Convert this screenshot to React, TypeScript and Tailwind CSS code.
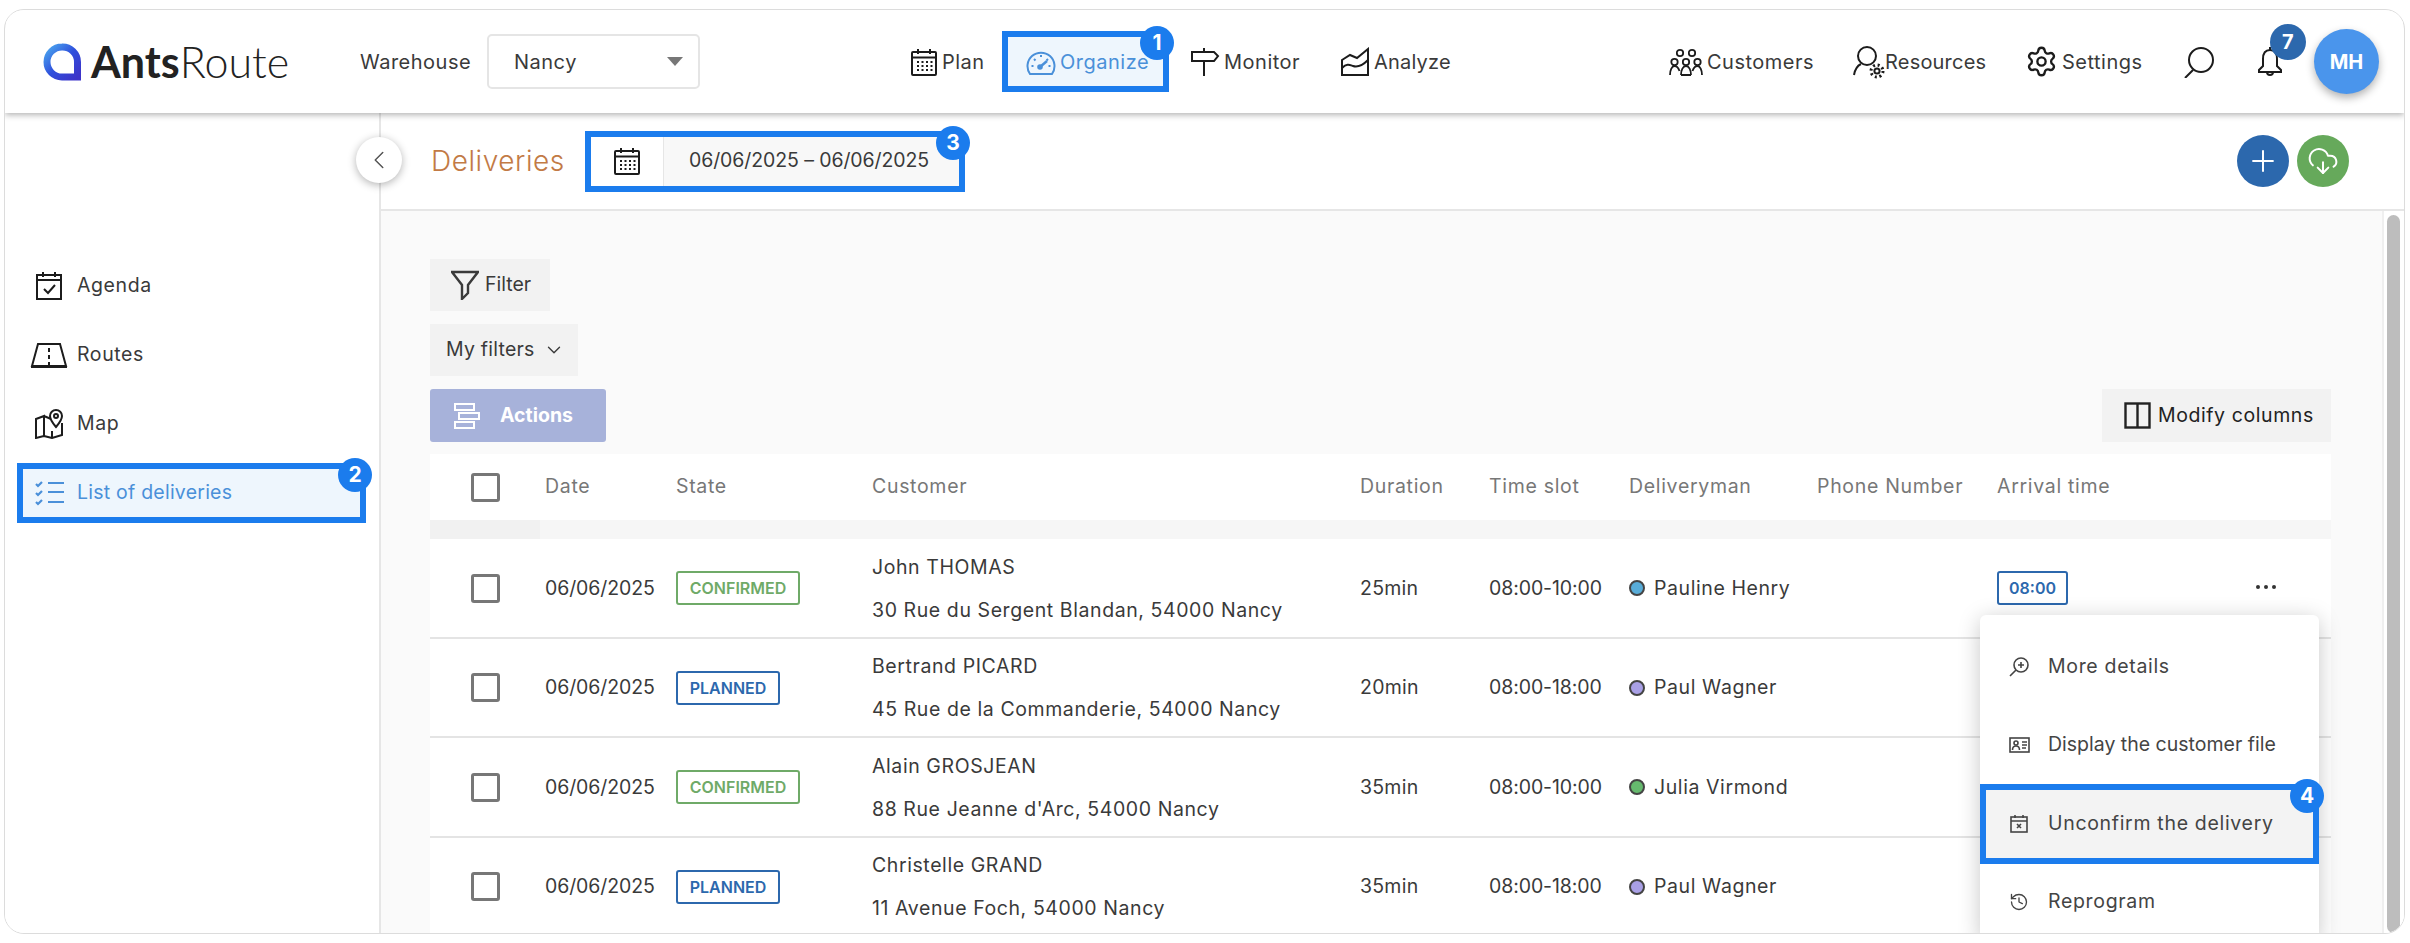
import { ReactNode } from "react"
import { ChevronDown, ChevronLeft, CloudDownload, History, Plus, Settings } from "lucide-react"

const ROW_GRID = "grid grid-cols-[115px_131px_196px_488px_129px_140px_188px_180px_255px_79px] items-center"

const DELIVERIES = [
    { state: "CONFIRMED", name: "John THOMAS", address: "30 Rue du Sergent Blandan, 54000 Nancy", duration: "25min", slot: "08:00-10:00", man: "Pauline Henry", dot: "bg-[#58acd8]", arrival: "08:00" },
    { state: "PLANNED", name: "Bertrand PICARD", address: "45 Rue de la Commanderie, 54000 Nancy", duration: "20min", slot: "08:00-18:00", man: "Paul Wagner", dot: "bg-[#a9a0e6]", arrival: "" },
    { state: "CONFIRMED", name: "Alain GROSJEAN", address: "88 Rue Jeanne d'Arc, 54000 Nancy", duration: "35min", slot: "08:00-10:00", man: "Julia Virmond", dot: "bg-[#66b96e]", arrival: "" },
    { state: "PLANNED", name: "Christelle GRAND", address: "11 Avenue Foch, 54000 Nancy", duration: "35min", slot: "08:00-18:00", man: "Paul Wagner", dot: "bg-[#a9a0e6]", arrival: "" },
]

function Svg({ w, h, children, sw = 2 }: { w: number; h: number; children: ReactNode; sw?: number }) {
    return (
        <svg width={w} height={h} viewBox={`0 0 ${w} ${h}`} fill="none" stroke="currentColor" strokeWidth={sw} className="shrink-0">
            {children}
        </svg>
    )
}

function Logo() {
    return (
        <svg width="40" height="38" viewBox="0 0 40 38" fill="none" className="shrink-0">
            <defs>
                <linearGradient id="logoGrad" x1="0" y1="0" x2="1" y2="1">
                    <stop offset="0" stopColor="#4aa5ee" />
                    <stop offset="0.5" stopColor="#2f4fdc" />
                    <stop offset="1" stopColor="#3d34c9" />
                </linearGradient>
            </defs>
            <path d="M20 4a15 15 0 0 1 15.5 15v15H20a15 15 0 0 1 0-30z" stroke="url(#logoGrad)" strokeWidth="7" />
        </svg>
    )
}

function CalendarGrid() {
    return (
        <Svg w={28} h={28}>
            <rect x="2" y="4" width="24" height="23" rx="1" />
            <path d="M2 9.5h24M8 1v5M20 1v5" />
            <g fill="currentColor" stroke="none">
                {[13, 17, 21].map((y) =>
                    [7, 11.5, 16, 20.5].map((x) => <rect key={`${x}-${y}`} x={x} y={y} width="2" height="2" />)
                )}
            </g>
        </Svg>
    )
}

function Gauge() {
    return (
        <Svg w={30} h={28} sw={2}>
            <path d="M4 26a13.5 13.5 0 1 1 22 0z" />
            <path d="M15 7v2M8 11l1.5 1.5M5.5 18h2M24.5 18h-2M22 11l-1.5 1.5" />
            <path d="M14 19l7-6" strokeWidth="2.5" />
            <circle cx="14" cy="19" r="1.8" fill="currentColor" />
        </Svg>
    )
}

function Signpost() {
    return (
        <Svg w={30} h={28}>
            <path d="M14 0v4M2 4h22l4 4-4 5H2zM14 13v15" />
        </Svg>
    )
}

function AnalyzeIcon() {
    return (
        <Svg w={30} h={30}>
            <path d="M2 13l8-5 7 3 11-9v26H2z" />
            <path d="M2 21c5-5 8-3 11-2s8 1 15-6M2 28h26" />
        </Svg>
    )
}

function CustomersIcon() {
    return (
        <Svg w={34} h={28} sw={1.8}>
            <circle cx="11" cy="5" r="3.2" />
            <circle cx="23" cy="5" r="3.2" />
            <circle cx="5.5" cy="14" r="3.2" />
            <circle cx="17" cy="14" r="3.2" />
            <circle cx="28.5" cy="14" r="3.2" />
            <path d="M1 27c0-5 2-9 4.5-9s4 2 5 5M12 27c0-5 2-9 5-9s5 4 5 9M33 27c0-5-2-9-4.5-9s-4 2-5 5M12 27h10" />
        </Svg>
    )
}

function ResourcesIcon() {
    return (
        <Svg w={36} h={34}>
            <circle cx="14" cy="11" r="9" />
            <path d="M1 30c1-6 3-9 7-11" />
            <circle cx="24" cy="26" r="2.6" />
            <circle cx="24" cy="26" r="6" strokeWidth="3" strokeDasharray="2 2.7" />
        </Svg>
    )
}

function SearchIcon() {
    return (
        <Svg w={32} h={32}>
            <circle cx="18" cy="14" r="12" />
            <path d="M10 24L2 32" />
        </Svg>
    )
}

function BellIcon() {
    return (
        <Svg w={26} h={32}>
            <path d="M13 4c-5 0-7 4-7 9v7l-4 4v2h22v-2l-4-4v-7c0-5-2-9-7-9zM13 1v3M10 26a3 3 0 0 0 6 0" />
        </Svg>
    )
}

function AgendaIcon() {
    return (
        <Svg w={26} h={28}>
            <rect x="1" y="3" width="24" height="24" />
            <path d="M1 8h24M7 0v5M19 0v5M8 17l4 4 7-8" />
        </Svg>
    )
}

function RoutesIcon() {
    return (
        <Svg w={38} h={26}>
            <path d="M8 2h22l6 22H2zM1 25h36M19 6v4M19 13v4M19 20v3" />
        </Svg>
    )
}

function MapIcon() {
    return (
        <Svg w={30} h={30}>
            <path d="M2 10l8-3v20l-8 2zM10 7l7 3M10 27l8 2 10-3V14M18 22v7" />
            <path d="M22 1a6 6 0 0 1 6 6c0 4-6 11-6 11s-6-7-6-11a6 6 0 0 1 6-6z" />
            <circle cx="22" cy="7" r="2" />
        </Svg>
    )
}

function ListIcon() {
    return (
        <Svg w={30} h={26}>
            <path d="M1 4l2 2 4-4M1 13l2 2 4-4M1 22l2 2 4-4" strokeWidth="2.2" />
            <path d="M13 3h16M13 12h16M13 22h16" strokeWidth="2.2" />
        </Svg>
    )
}

function FunnelIcon() {
    return (
        <Svg w={28} h={30} sw={2.4}>
            <path d="M1 2h26L17 15v8l-6 6V15z" />
        </Svg>
    )
}

function ActionsIcon() {
    return (
        <Svg w={26} h={26}>
            <rect x="1" y="1" width="19" height="6" />
            <rect x="5" y="10" width="20" height="6" />
            <rect x="1" y="19" width="19" height="6" />
        </Svg>
    )
}

function ColumnsIcon() {
    return (
        <Svg w={27} h={27} sw={2.4}>
            <rect x="1.5" y="1.5" width="24" height="24" />
            <path d="M13.5 1.5v24" />
        </Svg>
    )
}

function MoreIcon() {
    return (
        <Svg w={20} h={20} sw={1.6}>
            <circle cx="12" cy="8" r="7" />
            <path d="M7 13l-6 6M12 5v6M9 8h6" />
        </Svg>
    )
}

function CardIcon() {
    return (
        <Svg w={21} h={16} sw={1.6}>
            <rect x="1" y="1" width="19" height="14" />
            <circle cx="7" cy="6" r="2" />
            <path d="M3.5 13c0-3 1.5-4 3.5-4s3.5 1 3.5 4M13 5h5M13 8h5M13 11h4" />
        </Svg>
    )
}

function CalendarX() {
    return (
        <Svg w={18} h={18} sw={1.6}>
            <rect x="1" y="2" width="16" height="15" />
            <path d="M1 6h16M5 0v3M13 0v3M7 9l4 4M11 9l-4 4" />
        </Svg>
    )
}

function Marker({ n, className }: { n: number; className: string }) {
    return (
        <span className={`absolute flex h-[34px] w-[34px] items-center justify-center rounded-full bg-[#1b7ced] text-[21px] font-bold tracking-normal text-white ${className}`}>
            {n}
        </span>
    )
}

function NavItem({ icon, label, className }: { icon: ReactNode; label: string; className: string }) {
    return (
        <div className={`flex shrink-0 items-center gap-[4px] [&>svg]:text-[#1c1c1c] ${className}`}>
            {icon}
            <span>{label}</span>
        </div>
    )
}

function SideItem({ icon, label, className }: { icon: ReactNode; label: string; className: string }) {
    return (
        <div className={`flex items-center ${className}`}>
            <div className="flex w-[72px] shrink-0 justify-center pl-[16px] text-[#1c1c1c]">{icon}</div>
            <span className="tracking-[0.03em]">{label}</span>
        </div>
    )
}

function StateBadge({ state }: { state: string }) {
    const confirmed = state === "CONFIRMED"
    return (
        <span className={`inline-flex h-[34px] items-center justify-center rounded-[3px] border-2 text-[16px] font-semibold tracking-normal ${confirmed ? "w-[124px] border-[#6faa68] text-[#6faa68]" : "w-[104px] border-[#2c68ad] text-[#2c68ad]"}`}>
            {state}
        </span>
    )
}

function Checkbox() {
    return (
        <div className="pl-[41px]">
            <div className="h-[29px] w-[29px] rounded-[3px] border-[3px] border-[#777]" />
        </div>
    )
}

export default function App() {
    return (
        <div className="h-[943px] w-[2410px] overflow-hidden bg-white pb-[9px] pl-[4px] pr-[5px] pt-[9px] font-['Inter',sans-serif] text-[19.5px] tracking-[0.012em] text-[#3a3a3a]">
            <div className="flex h-full flex-col overflow-hidden rounded-[20px] border border-[#dcdcdc]">
                {/* Top bar */}
                <header className="relative z-20 flex h-[103px] shrink-0 items-center bg-white text-[20px] tracking-[0.025em] shadow-[0_2px_6px_rgba(0,0,0,0.3)]">
                    <div className="ml-[37px] flex w-[248px] shrink-0 items-center gap-[9px] font-['Lato',sans-serif] text-[43px] leading-none tracking-normal text-[#222]">
                        <Logo />
                        <span>
                            <span className="font-bold">Ants</span>
                            <span className="font-light">Route</span>
                        </span>
                    </div>
                    <span className="ml-[70px] w-[127px] shrink-0">Warehouse</span>
                    <div className="flex h-[55px] w-[213px] shrink-0 items-center rounded-[5px] border-2 border-[#e5e5e5] pl-[25px]">
                        <span>Nancy</span>
                        <span className="ml-[90px] h-0 w-0 border-x-[8px] border-t-[9px] border-x-transparent border-t-[#777]" />
                    </div>

                    <NavItem icon={<CalendarGrid />} label="Plan" className="ml-[210px] w-[92px]" />
                    <div className="relative flex h-[61px] w-[167px] shrink-0 items-center gap-[4px] border-[6px] border-[#1b7ced] bg-[#eef6fd] pl-[18px] text-[#4a90d9]">
                        <Gauge />
                        <span>Organize</span>
                        <Marker n={1} className="right-[-11px] top-[-11px]" />
                    </div>
                    <NavItem icon={<Signpost />} label="Monitor" className="ml-[21px] w-[150px]" />
                    <NavItem icon={<AnalyzeIcon />} label="Analyze" className="w-[329px] tracking-[0.01em]" />
                    <NavItem icon={<CustomersIcon />} label="Customers" className="w-[184px] gap-[2px]" />
                    <NavItem icon={<ResourcesIcon />} label="Resources" className="w-[172px] gap-0 tracking-[0.01em] [&>span]:ml-[-8px]" />
                    <NavItem icon={<Settings size={33} strokeWidth={1.7} />} label="Settings" className="w-[158px] gap-0" />
                    <div className="w-[74px] shrink-0 text-[#1c1c1c]">
                        <SearchIcon />
                    </div>
                    <div className="relative w-[57px] shrink-0 text-[#1c1c1c]">
                        <BellIcon />
                        <span className="absolute left-[13px] top-[-22px] flex h-[36px] w-[36px] items-center justify-center rounded-full bg-[#2c68ad] text-[20px] font-bold text-white">
                            7
                        </span>
                    </div>
                    <div className="z-10 flex h-[65px] w-[65px] shrink-0 items-center justify-center rounded-full bg-[#4a95ec] text-[20px] font-bold tracking-normal text-white shadow-[0_4px_8px_rgba(0,0,0,0.3)]">
                        MH
                    </div>
                </header>

                <div className="flex min-h-0 flex-1">
                    {/* Sidebar */}
                    <aside className="relative flex w-[376px] shrink-0 flex-col border-r-2 border-[#e6e6e6] bg-white pt-[139px]">
                        <SideItem icon={<AgendaIcon />} label="Agenda" className="h-[68px]" />
                        <SideItem icon={<RoutesIcon />} label="Routes" className="h-[69px]" />
                        <SideItem icon={<MapIcon />} label="Map" className="h-[69px]" />
                        <div className="relative ml-[12px] mt-[5px] flex h-[60px] w-[349px] items-center border-[6px] border-[#1b7ced] bg-[#eef6fd] text-[#4a90d9]">
                            <div className="ml-[12px] w-[42px] shrink-0">
                                <ListIcon />
                            </div>
                            <span>List of deliveries</span>
                            <Marker n={2} className="right-[-12px] top-[-11px]" />
                        </div>
                        <div className="absolute right-[-23px] top-[24px] z-10 flex h-[46px] w-[46px] items-center justify-center rounded-full bg-white shadow-[0_2px_8px_rgba(0,0,0,0.3)]">
                            <ChevronLeft size={30} strokeWidth={1.2} className="text-[#555]" />
                        </div>
                    </aside>

                    <main className="flex min-w-0 flex-1 flex-col">
                        {/* Title row */}
                        <div className="flex h-[98px] shrink-0 items-center border-b-2 border-[#e6e6e6] bg-white pl-[50px]">
                            <span className="w-[154px] shrink-0 text-[28px] font-light tracking-[0.02em] text-[#c27a45]">Deliveries</span>
                            <div className="relative flex h-[61px] w-[380px] shrink-0 items-center border-[6px] border-[#1b7ced] bg-[#f8f8f8]">
                                <div className="flex h-full w-[73px] shrink-0 items-center justify-center border-r border-[#e6e6e6] bg-white text-[#1c1c1c]">
                                    <CalendarGrid />
                                </div>
                                <span className="ml-[25px] whitespace-nowrap tracking-[-0.1px]">06/06/2025 – 06/06/2025</span>
                                <Marker n={3} className="right-[-11px] top-[-11px]" />
                            </div>
                            <div className="ml-auto mr-[55px] flex gap-[8px]">
                                <div className="flex h-[52px] w-[52px] items-center justify-center rounded-full bg-[#2c68ad] text-white">
                                    <Plus size={34} strokeWidth={1.4} />
                                </div>
                                <div className="flex h-[52px] w-[52px] items-center justify-center rounded-full bg-[#66a95b] text-white">
                                    <CloudDownload size={32} strokeWidth={1.5} />
                                </div>
                            </div>
                        </div>

                        <div className="flex min-h-0 flex-1 bg-[#fafafa]">
                            <div className="relative min-w-0 flex-1 overflow-hidden pl-[49px] pr-[51px] pt-[48px]">
                                <div className="flex h-[52px] w-[120px] items-center gap-[6px] bg-[#f2f2f2] pl-[21px]">
                                    <FunnelIcon />
                                    <span className="tracking-normal">Filter</span>
                                </div>
                                <div className="mt-[13px] flex h-[52px] w-[148px] items-center gap-[8px] bg-[#f2f2f2] pl-[16px]">
                                    <span>My filters</span>
                                    <ChevronDown size={22} strokeWidth={1.5} />
                                </div>
                                <div className="mt-[13px] flex h-[53px] items-center justify-between">
                                    <div className="flex h-full w-[176px] items-center gap-[20px] rounded-[3px] bg-[#a7b2da] pl-[24px] font-bold tracking-normal text-white">
                                        <ActionsIcon />
                                        <span>Actions</span>
                                    </div>
                                    <div className="flex h-full w-[229px] items-center gap-[7px] bg-[#f2f2f2] pl-[22px] tracking-[0.03em] text-[#222]">
                                        <ColumnsIcon />
                                        <span>Modify columns</span>
                                    </div>
                                </div>

                                {/* Table */}
                                <div className={`${ROW_GRID} mt-[12px] h-[66px] bg-white tracking-[0.035em] text-[#777]`}>
                                    <Checkbox />
                                    <span>Date</span>
                                    <span>State</span>
                                    <span>Customer</span>
                                    <span>Duration</span>
                                    <span>Time slot</span>
                                    <span>Deliveryman</span>
                                    <span>Phone Number</span>
                                    <span>Arrival time</span>
                                    <span />
                                </div>
                                <div className="h-[19px] bg-[#f6f6f6]">
                                    <div className="h-full w-[110px] bg-[#f1f1f1]" />
                                </div>
                                {DELIVERIES.map((d, i) => (
                                    <div key={d.name} className={`${ROW_GRID} h-[99.5px] border-b-2 border-[#e4e4e4] bg-white pt-[1px]`}>
                                        <Checkbox />
                                        <span className="tracking-[-0.1px]">06/06/2025</span>
                                        <div>
                                            <StateBadge state={d.state} />
                                        </div>
                                        <div className="flex flex-col gap-[21px] leading-[22px] tracking-[0.03em]">
                                            <span>{d.name}</span>
                                            <span>{d.address}</span>
                                        </div>
                                        <span>{d.duration}</span>
                                        <span className="tracking-[-0.1px]">{d.slot}</span>
                                        <div className="flex items-center gap-[9px] tracking-[0.03em]">
                                            <span className={`h-[16px] w-[16px] rounded-full border-2 border-[#444] ${d.dot}`} />
                                            <span>{d.man}</span>
                                        </div>
                                        <span />
                                        <div>
                                            {d.arrival && (
                                                <span className="inline-flex h-[34px] w-[71px] items-center justify-center rounded-[3px] border-2 border-[#2c68ad] text-[16px] font-semibold tracking-normal text-[#2c68ad]">
                                                    {d.arrival}
                                                </span>
                                            )}
                                        </div>
                                        <div>
                                            {i === 0 && (
                                                <div className="flex w-[28px] justify-center gap-[4px] pb-[2px]">
                                                    <span className="h-[4px] w-[4px] rounded-full bg-[#333]" />
                                                    <span className="h-[4px] w-[4px] rounded-full bg-[#333]" />
                                                    <span className="h-[4px] w-[4px] rounded-full bg-[#333]" />
                                                </div>
                                            )}
                                        </div>
                                    </div>
                                ))}

                                {/* Row actions menu */}
                                <div className="absolute left-[1599px] top-[404px] z-10 w-[339px] rounded-[6px] bg-white pt-[13px] tracking-[0.035em] text-[#444] shadow-[0_4px_22px_rgba(0,0,0,0.22)]">
                                    <div className="flex h-[78px] items-center">
                                        <div className="flex w-[68px] shrink-0 justify-center pl-[10px]">
                                            <MoreIcon />
                                        </div>
                                        <span>More details</span>
                                    </div>
                                    <div className="flex h-[78px] items-center">
                                        <div className="flex w-[68px] shrink-0 justify-center pl-[10px]">
                                            <CardIcon />
                                        </div>
                                        <span className="tracking-normal">Display the customer file</span>
                                    </div>
                                    <div className="relative flex h-[80px] items-center border-[6px] border-[#1b7ced] bg-[#f3f3f3]">
                                        <div className="flex w-[62px] shrink-0 justify-center pl-[4px]">
                                            <CalendarX />
                                        </div>
                                        <span>Unconfirm the delivery</span>
                                        <Marker n={4} className="right-[-11px] top-[-11px]" />
                                    </div>
                                    <div className="flex h-[76px] items-center">
                                        <div className="flex w-[68px] shrink-0 justify-center pl-[10px]">
                                            <History size={20} strokeWidth={1.6} />
                                        </div>
                                        <span>Reprogram</span>
                                    </div>
                                </div>
                            </div>

                            {/* Scrollbar */}
                            <div className="h-full w-[22px] shrink-0 border-l-2 border-[#efefef] bg-white pl-[3px] pt-[4px]">
                                <div className="h-full w-[13px] rounded-[7px] bg-[#bdbdbd]" />
                            </div>
                        </div>
                    </main>
                </div>
            </div>
        </div>
    )
}
